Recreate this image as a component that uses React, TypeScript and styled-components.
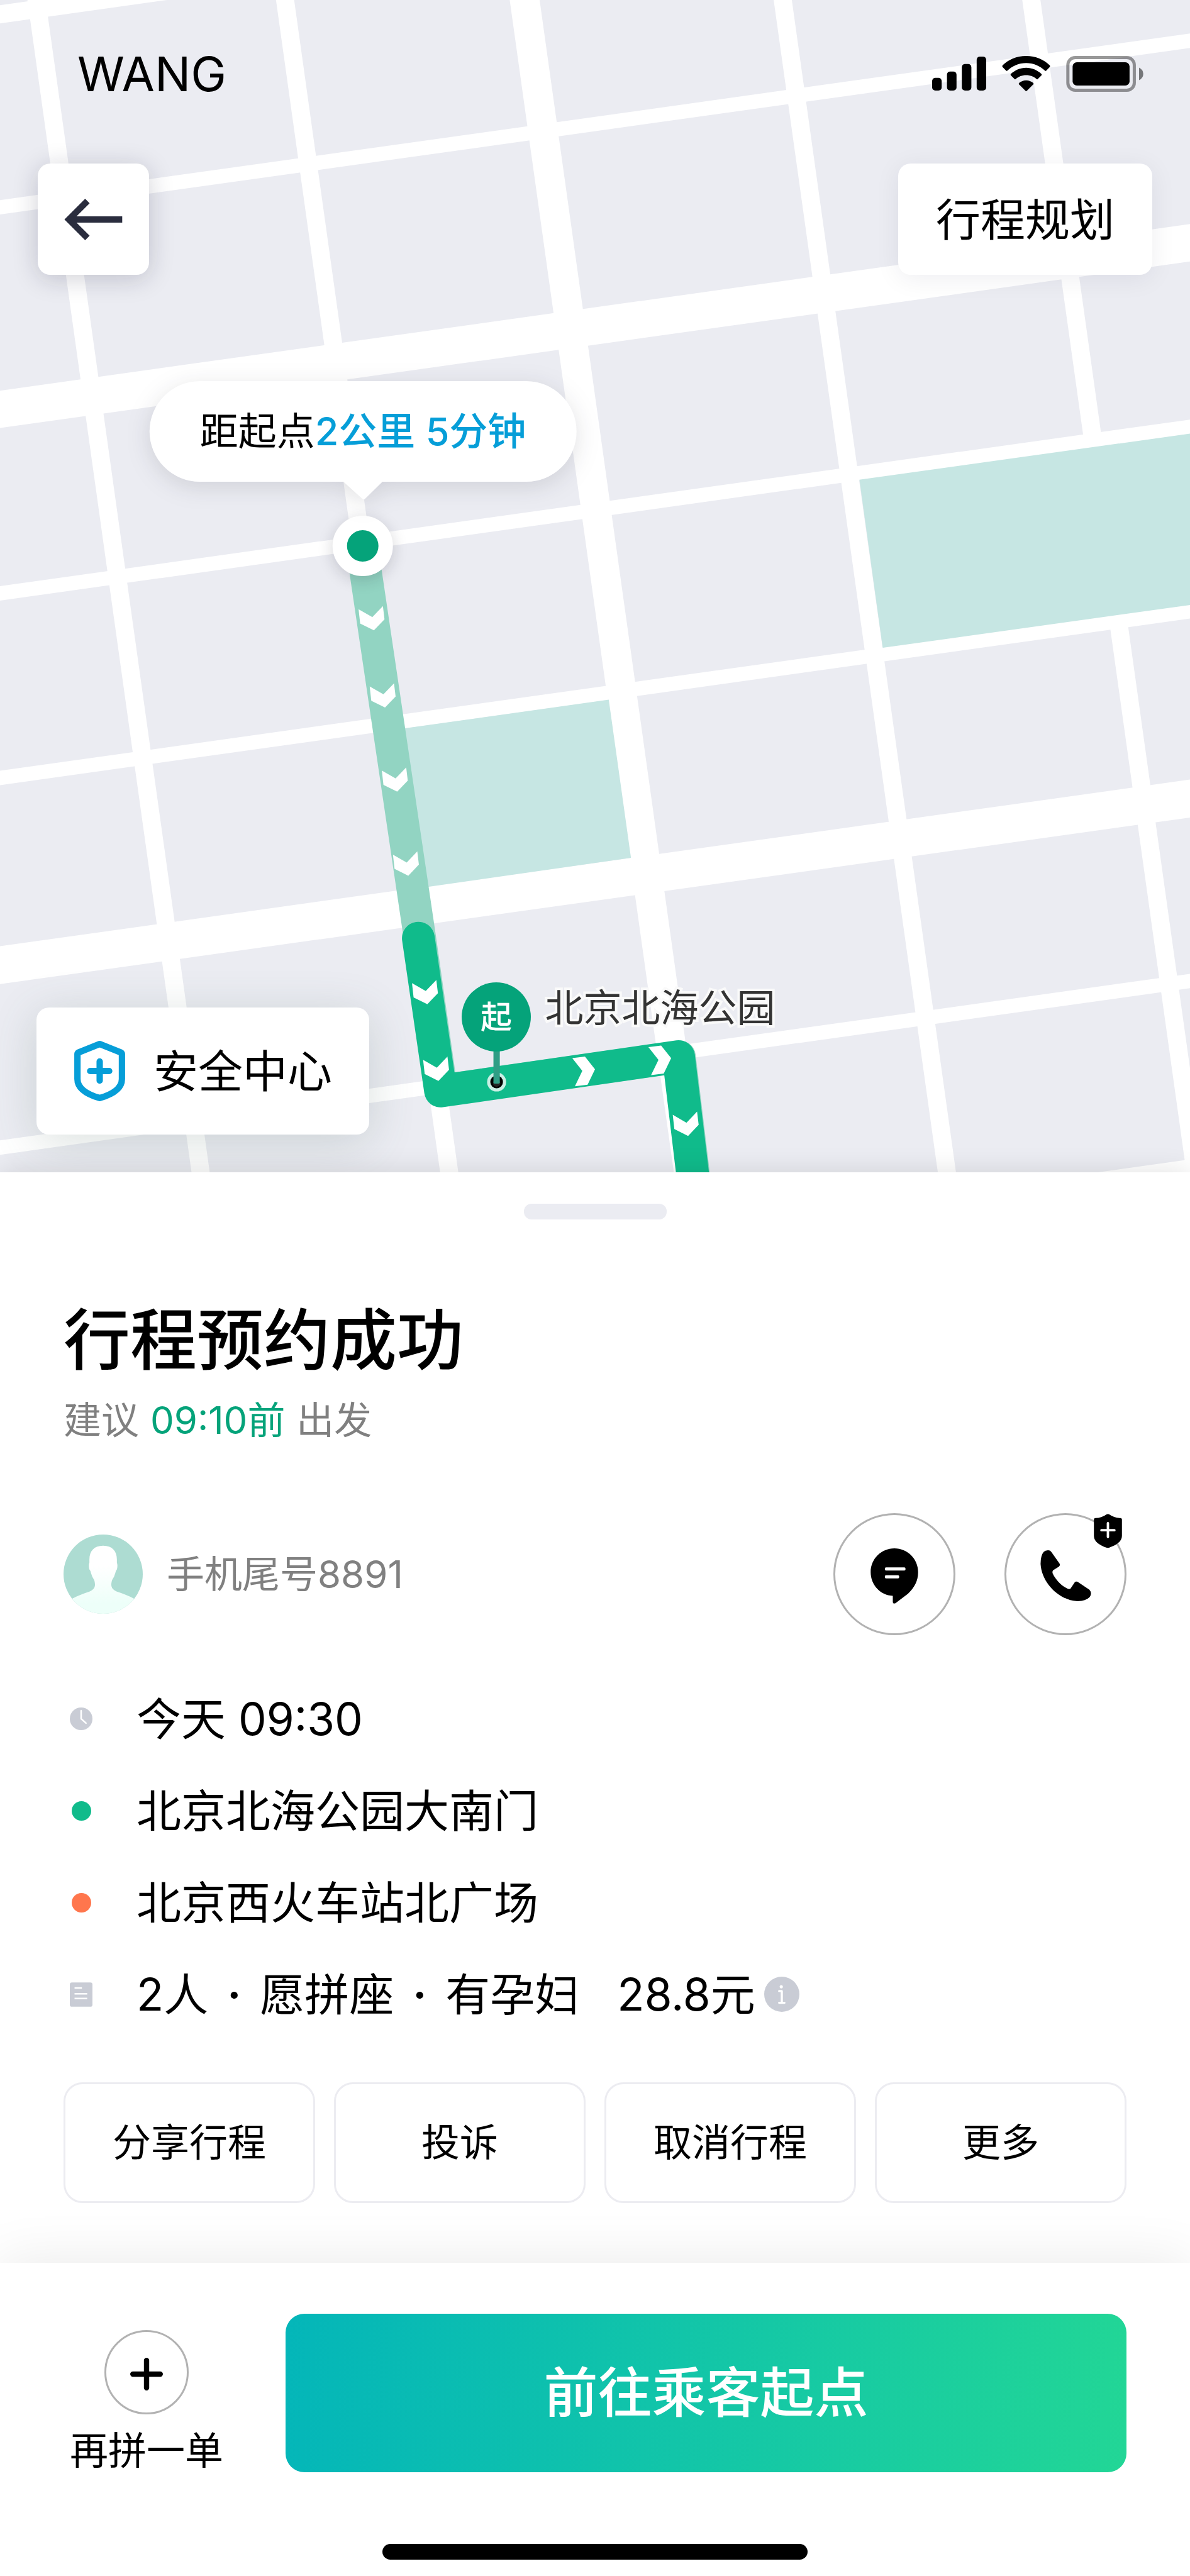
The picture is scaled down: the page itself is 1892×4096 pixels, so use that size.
import React from "react";
import styled, { createGlobalStyle } from "styled-components";

const color = {
  ink: "#000000",
  muted: "#808080",
  line: "#ececf1",
  ring: "#b2b2b2",
  icon: "#c9ccd5",
  land: "#ebecf2",
  park: "#c6e6e3",
  green: "#05a37a",
  route: "#10bb8b",
  routeDone: "#92d4c2",
  blue: "#069ed8",
  orange: "#ff764d",
};

const GlobalStyle = createGlobalStyle`
  *, *::before, *::after { box-sizing: border-box; }
  body {
    margin: 0;
    background: #fff;
    color: ${color.ink};
    font-family: Inter, "Noto Sans CJK SC", sans-serif;
    font-size: 71px;
    line-height: 100px;
  }
  button { font: inherit; color: inherit; padding: 0; border: 0; background: none; cursor: pointer; }
  h1, p, ul { margin: 0; padding: 0; }
  svg { display: block; flex: none; }
`;

const Screen = styled.div`
  display: flex;
  flex-direction: column;
  min-height: 100vh;
  overflow: hidden;
`;

/* ---------- map ---------- */

const MapStage = styled.section`
  position: relative;
  display: grid;
  > * { grid-area: 1 / 1; }
`;

const MapDrawing = styled.svg`
  width: 100%;
  height: auto;
  background: ${color.land};
`;

const MapOverlay = styled.div`
  display: flex;
  flex-direction: column;
  z-index: 1;
`;

const StatusBar = styled.header`
  display: flex;
  align-items: center;
  justify-content: space-between;
  height: 234px;
  padding: 0 74px 0 123px;
`;

const Carrier = styled.span`
  font-size: 76px;
`;

const StatusIcons = styled.div`
  display: flex;
  align-items: center;
  gap: 25px;
`;

const TopControls = styled.nav`
  display: flex;
  justify-content: space-between;
  padding: 26px 60px 0;
`;

const FloatingButton = styled.button<{ $width: number }>`
  display: flex;
  align-items: center;
  justify-content: center;
  width: ${(p) => p.$width}px;
  height: 177px;
  border-radius: 20px;
  background: #fff;
  box-shadow: 0 6px 40px rgba(20, 20, 50, ${(p) => (p.$width > 200 ? 0.07 : 0.2)});
`;

const SafetyButton = styled.button`
  display: flex;
  align-items: center;
  align-self: flex-start;
  gap: 45px;
  height: 202px;
  margin: auto 0 60px 58px;
  padding: 0 59px 0 60px;
  border-radius: 20px;
  background: #fff;
  box-shadow: 0 12px 72px rgba(70, 100, 90, 0.2);
`;

const MapPin = styled.div<{ $x: number; $y: number }>`
  position: absolute;
  left: ${(p) => p.$x}%;
  top: ${(p) => p.$y}%;
  display: flex;
  flex-direction: column;
  align-items: center;
  transform: translateX(-50%);
`;

const Bubble = styled.p`
  display: flex;
  align-items: center;
  height: 160px;
  padding: 0 80px;
  border-radius: 80px;
  background: #fff;
  font-size: 61px;
  white-space: pre;
`;

const BubbleShadow = styled.div`
  display: flex;
  flex-direction: column;
  align-items: center;
  filter: drop-shadow(0 8px 18px rgba(20, 20, 40, 0.13));
`;

const BubbleTail = styled.span`
  width: 62px;
  height: 30px;
  background: #fff;
  clip-path: polygon(0 0, 100% 0, 54% 94%, 50% 94%);
`;

const Distance = styled.strong`
  color: ${color.blue};
  font-weight: 500;
`;

const OriginDot = styled.span`
  width: 96px;
  height: 96px;
  margin-top: 24px;
  border: 23px solid #fff;
  border-radius: 50%;
  background: ${color.green};
  box-shadow: 0 6px 24px rgba(20, 20, 40, 0.18);
`;

const PickupHead = styled.span`
  display: flex;
  align-items: center;
  justify-content: center;
  width: 110px;
  height: 110px;
  border-radius: 50%;
  background: ${color.green};
  color: #fff;
  font-size: 50px;
  font-weight: 500;
`;

const PlaceLabel = styled.span`
  position: absolute;
  left: 45.8%;
  top: 83.3%;
  color: #333;
  font-size: 61px;
  white-space: nowrap;
  -webkit-text-stroke: 8px #fafafa;
  paint-order: stroke fill;
`;

/* ---------- sheet ---------- */

const Sheet = styled.main`
  position: relative;
  z-index: 2;
  flex: 1;
  display: flex;
  flex-direction: column;
  background: #fff;
  box-shadow: 0 0 40px rgba(0, 0, 0, 0.12);
`;

const Handle = styled.span`
  align-self: center;
  width: 227px;
  height: 25px;
  margin-top: 50px;
  border-radius: 12px;
  background: ${color.land};
`;

const SheetBody = styled.div`
  padding: 118px 101px 95px;
`;

const Title = styled.h1`
  font-size: 106px;
  line-height: 148px;
  font-weight: 500;
`;

const Advice = styled.p`
  margin-top: 11px;
  font-size: 60px;
  line-height: 84px;
  color: ${color.muted};
`;

const Depart = styled.span`
  color: ${color.green};
  margin: 0 1px;
`;

const PassengerRow = styled.div`
  display: flex;
  align-items: center;
  margin-top: 106px;
`;

const PassengerName = styled.span`
  flex: 1;
  margin-left: 38px;
  font-size: 60px;
  color: ${color.muted};
`;

const RoundButton = styled.button<{ $size: number }>`
  position: relative;
  display: flex;
  align-items: center;
  justify-content: center;
  width: ${(p) => p.$size}px;
  height: ${(p) => p.$size}px;
  padding-top: 5px;
  border: 3px solid ${color.ring};
  border-radius: 50%;
`;

const Contacts = styled.div`
  display: flex;
  gap: 78px;
`;

const Badge = styled.span`
  position: absolute;
  top: -2px;
  right: 4px;
`;

const Details = styled.ul`
  display: flex;
  flex-direction: column;
  gap: 46px;
  margin-top: 83px;
  list-style: none;
`;

const DetailRow = styled.li`
  display: flex;
  align-items: center;
  white-space: nowrap;
`;

const Marker = styled.span`
  display: flex;
  justify-content: center;
  width: 56px;
  margin-right: 60px;
`;

const Dot = styled.span<{ $fill: string }>`
  width: 31px;
  height: 31px;
  border-radius: 50%;
  background: ${(p) => p.$fill};
`;

const Separator = styled.span`
  display: inline-block;
  width: 82px;
  text-align: center;
  font-weight: 600;
`;

const Price = styled.span`
  margin: 0 14px 0 60px;
`;

const Actions = styled.div`
  display: grid;
  grid-template-columns: repeat(4, 1fr);
  gap: 30px;
  margin-top: 90px;
`;

const ActionButton = styled.button`
  height: 192px;
  border: 3px solid ${color.line};
  border-radius: 30px;
  font-size: 61px;
`;

const Footer = styled.footer`
  display: flex;
  flex-direction: column;
  margin-top: auto;
  padding-bottom: 35px;
  background: #fff;
  box-shadow: 0 0 84px rgba(0, 0, 0, 0.09);
`;

const FooterRow = styled.div`
  display: flex;
  align-items: flex-start;
  gap: 99px;
  padding: 81px 101px 0 111px;
`;

const AddOrder = styled.label`
  display: flex;
  flex-direction: column;
  align-items: center;
  padding-top: 26px;
  gap: 16px;
  font-size: 61px;
  line-height: 84px;
`;

const GoButton = styled.button`
  flex: 1;
  height: 252px;
  border-radius: 30px;
  background: linear-gradient(95deg, #04b6b9, #22d696);
  color: #fff;
  font-size: 86px;
  font-weight: 500;
`;

const HomeBar = styled.span`
  align-self: center;
  width: 676px;
  height: 25px;
  margin-top: 106px;
  border-radius: 13px;
  background: #000;
`;

/* ---------- drawings ---------- */

/* Streets run on two perpendicular bearings; each one is stored by its start on the map edge. */
const avenues = [
  [69, 34], [539, 34], [992, 56], [1480, 34], [1950, 34],
];
const streets = [
  [27, 34], [392, 27], [774, 70], [1122, 27], [1471, 27], [1825, 71], [2170, 27], [2521, 27],
];
const downArrows = [
  [704, 1167], [725, 1313], [748, 1472], [769, 1631], [805, 1874], [826, 2019], [1298, 2123],
];
const rightArrows = [
  [1101, 2025], [1245, 2004],
];

function CityMap() {
  return (
    <MapDrawing viewBox="0 0 2250 2217" aria-hidden="true">
      <g stroke="#fff">
        {avenues.map(([x, w]) => (
          <line key={x} x1={x - 14} y1={-100} x2={x + 322} y2={2300} strokeWidth={w} />
        ))}
        {streets.map(([y, w]) => (
          <line key={y} x1={-100} y1={y + 14} x2={2350} y2={y - 329} strokeWidth={w} />
        ))}
      </g>
      <path d="M1625 907L2250 820V1144L1669 1225Z" fill={color.park} />
      <path d="M753 1379L1151 1323L1193 1622L796 1679Z" fill={color.park} />
      <g fill="none" strokeLinejoin="round">
        <path d="M684 1032L794 1774L835 2062L1285 1998L1314 2240" stroke={color.routeDone} strokeWidth="61" />
        <path d="M791 1774L833 2063L1283 1998L1312 2240" stroke={color.route} strokeWidth="62" strokeLinecap="round" />
      </g>
      <g fill="#fff">
        {downArrows.map(([x, y]) => (
          <path key={y} transform={`translate(${x} ${y})`} d="M-26-15L0 0L20-21L23 4L3 25L-23 12Z" />
        ))}
        {rightArrows.map(([x, y]) => (
          <path key={y} transform={`translate(${x} ${y})`} d="M-19-24L5-27L24-3L10 26L-14 29L0 0Z" />
        ))}
      </g>
      <circle cx="939" cy="2046" r="18" fill="#c9efe4" />
      <circle cx="939" cy="2046" r="12" fill="#000" />
      <circle cx="939" cy="2048" r="7" fill="#222" />
      <rect x="933" y="1960" width="12" height="89" rx="2" fill="#2f9e85" />
    </MapDrawing>
  );
}

const SignalIcon = () => (
  <svg width="86" height="54" viewBox="0 0 102 64" aria-hidden="true">
    <rect x="0" y="40" width="18" height="24" rx="6" />
    <rect x="28" y="28" width="18" height="36" rx="6" />
    <rect x="56" y="14" width="18" height="50" rx="6" />
    <rect x="84" y="0" width="18" height="64" rx="6" />
  </svg>
);

const WifiIcon = () => (
  <svg width="77" height="56" viewBox="0 0 92 67" aria-hidden="true">
    <path d="M46 0C64 0 80 7 91 18Q92 19.500 91 21L84 28Q83 29 82 28C72 19 60 13.500 46 13.500S20 19 10 28Q9 29 8 28L1 21Q0 19.500 1 18C12 7 28 0 46 0Z" />
    <path d="M46 22.500C57 22.500 67 27 75 34Q76.500 35.500 75 37L68 44Q67 45 66 44C60 39 54 36.500 46 36.500S32 39 26 44Q25 45 24 44L17 37Q15.500 35.500 17 34C25 27 35 22.500 46 22.500Z" />
    <path d="M46 46.500C51 46.500 56 48.500 59.500 51.500Q60.500 53 59.500 54L47.500 66Q46 67.500 44.500 66L32.500 54Q31.500 53 32.500 51.500C36 48.500 41 46.500 46 46.500Z" />
  </svg>
);

const BatteryIcon = () => (
  <svg width="123" height="57" viewBox="0 0 146 68" aria-hidden="true">
    <rect x="3" y="3" width="126" height="62" rx="14" fill="none" stroke="#000" strokeWidth="6" opacity="0.4" />
    <rect x="12" y="12" width="108" height="44" rx="8" />
    <path d="M138 22Q146 26 146 34T138 46Z" opacity="0.5" />
  </svg>
);

const BackIcon = () => (
  <svg width="94" height="66" viewBox="0 0 112 78" fill="none" stroke="#2a2d3e" strokeWidth="12" aria-hidden="true">
    <path d="M44 4L9 39L44 74M9 39H110" />
  </svg>
);

const ShieldIcon = () => (
  <svg width="81" height="96" viewBox="0 0 96 114" fill="none" stroke={color.blue} strokeWidth="12" strokeLinejoin="round" strokeLinecap="round" aria-hidden="true">
    <path d="M48 6L88 22Q90 23 90 25V72C90 90 72 101 48 108C24 101 6 90 6 72V25Q6 23 8 22Z" />
    <path d="M48 39V75M30 57H66" />
  </svg>
);

const AvatarIcon = () => (
  <svg width="126" height="126" viewBox="0 0 150 150" aria-hidden="true">
    <defs>
      <clipPath id="avatar-disc"><circle cx="75" cy="75" r="75" /></clipPath>
      <linearGradient id="avatar-body" x1="0" y1="0" x2="0" y2="1">
        <stop offset="0.3" stopColor="#fff" />
        <stop offset="0.85" stopColor="#edfff9" />
      </linearGradient>
    </defs>
    <g clipPath="url(#avatar-disc)">
      <rect width="150" height="150" fill="#addcd2" />
      <path d="M75 21C92 21 101 31 101 47V53Q103 59 101 66Q99 68 98 73Q96 81 92 86C88 99 92 104 101 108C113 112 124 116 133 121V150H17V121C26 116 37 112 49 108C58 104 62 99 58 86Q54 81 52 73Q51 68 49 66Q47 59 49 53V47C49 31 58 21 75 21Z" fill="url(#avatar-body)" />
    </g>
  </svg>
);

const MessageIcon = () => (
  <svg width="76" height="88" viewBox="0 0 90 105" aria-hidden="true">
    <path d="M45 0C70 0 90 20 90 45C90 62 83 74 71 86L47 104Q42 106 42 101V90C18 89 0 69 0 45C0 20 20 0 45 0Z" />
    <rect x="27" y="36" width="39" height="6" rx="2" fill="#fff" />
    <rect x="27" y="51" width="27" height="6" rx="2" fill="#fff" />
  </svg>
);

const PhoneIcon = () => (
  <svg width="81" height="81" viewBox="0 0 96 97" aria-hidden="true">
    <path d="M14 0Q19 0 21 4L36 25Q38 28 35 31L24 38Q22 40 23 44C28 55 38 66 49 72Q54 75 57 73L65 61Q68 58 72 61L93 75Q96 78 96 83Q94 96 70 97C34 95 2 61 0 26Q0 10 6 3Q9 0 14 0Z" />
  </svg>
);

const BadgeIcon = () => (
  <svg width="45" height="54" viewBox="0 0 52 63" aria-hidden="true">
    <path d="M24 1Q26 0 28 1Q38 8 49 8Q52 8 52 11V41C52 52 40 59 28 63Q26 63.500 24 63C12 59 0 52 0 41V11Q0 8 3 8Q14 8 24 1Z" />
    <path d="M26 17.500V43M14 30.500H38" stroke="#fff" strokeWidth="4.500" strokeLinecap="round" />
  </svg>
);

const ClockIcon = () => (
  <svg width="36" height="36" viewBox="0 0 42 42" aria-hidden="true">
    <circle cx="21" cy="21" r="21" fill={color.icon} />
    <path d="M21 6V21L30 29" fill="none" stroke="#fff" strokeWidth="3" strokeLinecap="round" />
  </svg>
);

const NoteIcon = () => (
  <svg width="36" height="39" viewBox="0 0 43 46" aria-hidden="true">
    <rect width="43" height="46" rx="4" fill={color.icon} />
    <path d="M9 10.500H23M9 21.500H33M9 30.500H33" stroke="#fff" strokeWidth="3" />
  </svg>
);

const InfoIcon = () => (
  <svg width="56" height="56" viewBox="0 0 66 66" aria-hidden="true">
    <circle cx="33" cy="33" r="33" fill={color.icon} />
    <circle cx="32" cy="19" r="3" fill="#fff" />
    <path d="M28 27H33V49M28 49H38" fill="none" stroke="#fff" strokeWidth="4" strokeLinecap="round" strokeLinejoin="round" />
  </svg>
);

const PlusIcon = () => (
  <svg width="52" height="52" viewBox="0 0 62 62" stroke="#000" strokeWidth="10" strokeLinecap="round" aria-hidden="true">
    <path d="M31 5V57M5 31H57" />
  </svg>
);

/* ---------- page ---------- */

const actions = ["分享行程", "投诉", "取消行程", "更多"];

export default function App() {
  return (
    <>
      <GlobalStyle />
      <Screen lang="zh-CN">
        <MapStage>
          <CityMap />
          <MapPin $x={30.5} $y={32.5}>
            <BubbleShadow>
              <Bubble>
                距起点<Distance>2公里 5分钟</Distance>
              </Bubble>
              <BubbleTail />
            </BubbleShadow>
            <OriginDot />
          </MapPin>
          <MapPin $x={41.7} $y={83.8}>
            <PickupHead>起</PickupHead>
          </MapPin>
          <PlaceLabel>北京北海公园</PlaceLabel>
          <MapOverlay>
            <StatusBar>
              <Carrier>WANG</Carrier>
              <StatusIcons>
                <SignalIcon />
                <WifiIcon />
                <BatteryIcon />
              </StatusIcons>
            </StatusBar>
            <TopControls>
              <FloatingButton $width={177} aria-label="返回">
                <BackIcon />
              </FloatingButton>
              <FloatingButton $width={404}>行程规划</FloatingButton>
            </TopControls>
            <SafetyButton>
              <ShieldIcon />
              安全中心
            </SafetyButton>
          </MapOverlay>
        </MapStage>

        <Sheet>
          <Handle />
          <SheetBody>
            <Title>行程预约成功</Title>
            <Advice>
              建议 <Depart>09:10前</Depart> 出发
            </Advice>
            <PassengerRow>
              <AvatarIcon />
              <PassengerName>手机尾号8891</PassengerName>
              <Contacts>
                <RoundButton $size={194} aria-label="发消息">
                  <MessageIcon />
                </RoundButton>
                <RoundButton $size={194} aria-label="打电话">
                  <PhoneIcon />
                  <Badge>
                    <BadgeIcon />
                  </Badge>
                </RoundButton>
              </Contacts>
            </PassengerRow>
            <Details>
              <DetailRow>
                <Marker><ClockIcon /></Marker>
                今天 09:30
              </DetailRow>
              <DetailRow>
                <Marker><Dot $fill={color.route} /></Marker>
                北京北海公园大南门
              </DetailRow>
              <DetailRow>
                <Marker><Dot $fill={color.orange} /></Marker>
                北京西火车站北广场
              </DetailRow>
              <DetailRow>
                <Marker><NoteIcon /></Marker>
                2人<Separator>·</Separator>愿拼座<Separator>·</Separator>有孕妇
                <Price>28.8元</Price>
                <InfoIcon />
              </DetailRow>
            </Details>
            <Actions>
              {actions.map((name) => (
                <ActionButton key={name}>{name}</ActionButton>
              ))}
            </Actions>
          </SheetBody>
          <Footer>
            <FooterRow>
              <AddOrder>
                <RoundButton $size={134}>
                  <PlusIcon />
                </RoundButton>
                再拼一单
              </AddOrder>
              <GoButton>前往乘客起点</GoButton>
            </FooterRow>
            <HomeBar />
          </Footer>
        </Sheet>
      </Screen>
    </>
  );
}
